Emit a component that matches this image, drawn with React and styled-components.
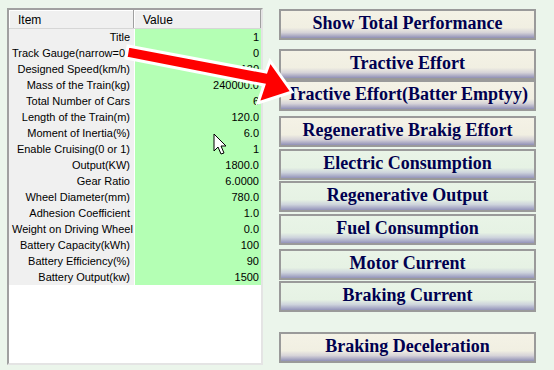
import React from "react";
import styled, { createGlobalStyle } from "styled-components";

const GlobalStyle = createGlobalStyle`
  html, body {
    margin: 0;
    padding: 0;
    background: #ebf5eb;
  }
`;

// Parameter rows of the list view
const rows = [
  ["Title", "1"],
  ["Track Gauge(narrow=0", "0", true],
  ["Designed Speed(km/h)", "130"],
  ["Mass of the Train(kg)", "240000.0"],
  ["Total Number of Cars", "6"],
  ["Length of the Train(m)", "120.0"],
  ["Moment of Inertia(%)", "6.0"],
  ["Enable Cruising(0 or 1)", "1"],
  ["Output(KW)", "1800.0"],
  ["Gear Ratio", "6.0000"],
  ["Wheel Diameter(mm)", "780.0"],
  ["Adhesion Coefficient", "1.0"],
  ["Weight on Driving Wheel", "0.0"],
  ["Battery Capacity(kWh)", "100"],
  ["Battery Efficiency(%)", "90"],
  ["Battery Output(kw)", "1500"],
];

// Buttons on the right: label, tone, space above
const buttons = [
  ["Show Total Performance", "beige", 0],
  ["Tractive Effort", "beige", 9],
  ["Tractive Effort(Batter Emptyy)", "beige", 0],
  ["Regenerative Brakig Effort", "beige", 5],
  ["Electric Consumption", "green", 2],
  ["Regenerative Output", "green", 1],
  ["Fuel Consumption", "green", 2],
  ["Motor Current", "green", 4],
  ["Braking Current", "green", 1],
  ["Braking Deceleration", "beige", 20],
];

const Page = styled.div`
  position: relative;
  width: 554px;
  height: 370px;
  box-sizing: border-box;
  padding: 8px 7px;
  display: flex;
  align-items: flex-start;
  background: #ebf5eb;
  overflow: hidden;
`;

const ListPanel = styled.div`
  width: 256px;
  height: 357px;
  box-sizing: border-box;
  background: #ffffff;
  border-top: 2px solid #a0a0a0;
  border-left: 2px solid #a0a0a0;
  border-right: 2px solid #e4e4e4;
  border-bottom: 2px solid #e4e4e4;
  font-family: "Liberation Sans", Arial, sans-serif;
  font-size: 11px;
  color: #000;
  overflow: hidden;
`;

const HeaderRow = styled.div`
  display: grid;
  grid-template-columns: 125px 1fr;
  height: 19px;
  background: #f0f0f0;
  border-bottom: 1px solid #d6d6d6;
  box-sizing: border-box;
  font-size: 12px;
`;

const HeaderCell = styled.div`
  display: flex;
  align-items: center;
  padding-left: 9px;
  padding-top: 1px;
  border-right: 1px solid #a0a0a0;
  box-shadow: inset 1px 1px 0 #ffffff;
`;

const Row = styled.div`
  display: grid;
  grid-template-columns: 125px 1fr;
  height: 16px;
`;

const LabelCell = styled.div`
  background: #f0f0f0;
  padding: 1px 4px 0 3px;
  line-height: 15px;
  white-space: nowrap;
  overflow: hidden;
  text-align: ${(p) => (p.$left ? "left" : "right")};
`;

const ValueCell = styled.div`
  background: #b4ffb4;
  margin-left: 1px;
  padding: 1px 2px 0 0;
  line-height: 15px;
  text-align: right;
  white-space: nowrap;
  overflow: hidden;
`;

const ButtonColumn = styled.div`
  margin-left: 16px;
  margin-top: 1px;
  width: 257px;
  display: flex;
  flex-direction: column;
`;

const ActionButton = styled.button`
  height: 31px;
  margin-top: ${(p) => p.$space}px;
  box-sizing: border-box;
  border: 2px solid #9a9a9a;
  padding: 0 0 2px;
  background: ${(p) =>
    p.$tone === "green"
      ? "linear-gradient(to bottom, #e9f4e7 0%, #e6f2e4 62%, #cdd3dc 80%, #9494ba 100%)"
      : "linear-gradient(to bottom, #f4f2e6 0%, #f1efe2 62%, #d6d3d8 80%, #9090b6 100%)"};
  font-family: "Liberation Serif", "Times New Roman", serif;
  font-weight: bold;
  font-size: 18px;
  color: #000050;
  display: flex;
  align-items: center;
  justify-content: center;
  white-space: nowrap;
  cursor: pointer;
`;

const Overlay = styled.svg`
  position: absolute;
  left: 0;
  top: 0;
  pointer-events: none;
`;

export default function App() {
  return (
    <>
      <GlobalStyle />
      <Page>
        <ListPanel>
          <HeaderRow>
            <HeaderCell>Item</HeaderCell>
            <HeaderCell>Value</HeaderCell>
          </HeaderRow>
          {rows.map(([label, value, left]) => (
            <Row key={label}>
              <LabelCell $left={left}>{label}</LabelCell>
              <ValueCell>{value}</ValueCell>
            </Row>
          ))}
        </ListPanel>
        <ButtonColumn>
          {buttons.map(([label, tone, space]) => (
            <ActionButton key={label} $tone={tone} $space={space}>
              {label}
            </ActionButton>
          ))}
        </ButtonColumn>

        {/* red annotation arrow + mouse cursor drawn over the window */}
        <Overlay width="554" height="370" viewBox="0 0 554 370">
          <polygon
            points="128,46 266,72 270,61 292,92 258,103 264,85 126,58"
            fill="#ff0000"
            stroke="#ffffff"
            strokeWidth="3"
          />
          <path
            d="M214 134 L214 151 L218 147 L221 154 L224 153 L221 146 L226 146 Z"
            fill="#ffffff"
            stroke="#000000"
            strokeWidth="1"
          />
        </Overlay>
      </Page>
    </>
  );
}
